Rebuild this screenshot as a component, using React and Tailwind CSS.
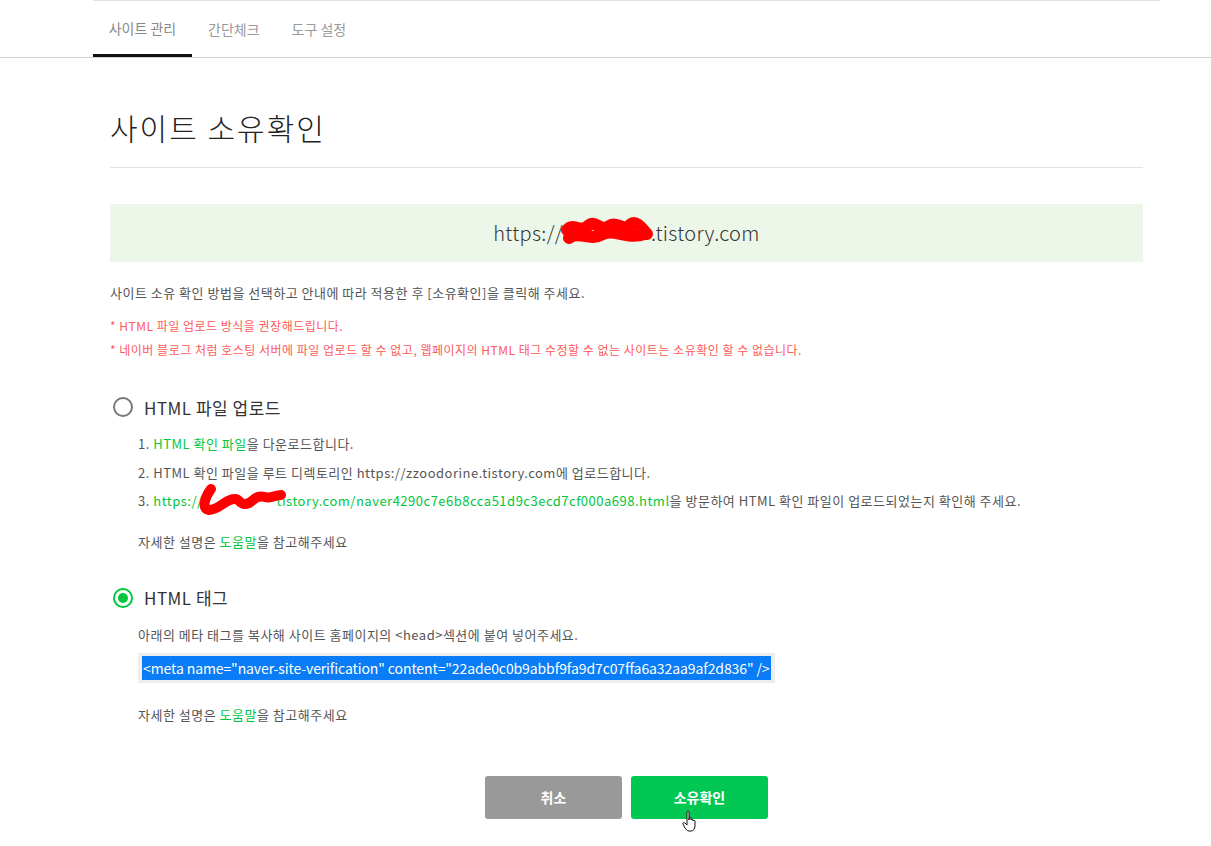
import React from "react";

const font = { fontFamily: '"Noto Sans CJK KR", "Noto Sans", sans-serif' };

const Radio = ({ checked }) =>
  checked ? (
    <span className="ml-[3px] w-[20px] h-[20px] rounded-full border-[2px] border-[#00c73c] flex items-center justify-center">
      <span className="w-[10px] h-[10px] rounded-full bg-[#00c73c]" />
    </span>
  ) : (
    <span className="ml-[3px] w-[20px] h-[20px] rounded-full border-[2px] border-[#777]" />
  );

const Help = () => (
  <p className="text-[13px] text-[#555] pl-[28px] tracking-[0.5px]">
    자세한 설명은 <span className="text-[#00c73c]">도움말</span>을 참고해주세요
  </p>
);

export default function App() {
  return (
    <div className="w-[1211px] h-[846px] bg-white overflow-hidden relative" style={font}>
      {/* tab bar */}
      <div className="border-b border-[#cfcfcf]">
        <div className="ml-[93px] w-[1067px] border-t border-[#e2e2e2] h-[57px] flex">
          <div className="w-[99px] flex items-center justify-center border-b-[3px] border-[#111] text-[14px] text-[#888] pt-[2px]">사이트 관리</div>
          <div className="px-[16px] flex items-center text-[14px] text-[#999]">간단체크</div>
          <div className="px-[16px] flex items-center text-[14px] text-[#999]">도구 설정</div>
        </div>
      </div>

      <div className="ml-[110px] w-[1033px]">
        <h1 className="text-[30px] font-light tracking-[2px] text-[#222] pt-[48px] pb-[19px] leading-[42px] border-b border-[#e3e3e3]">사이트 소유확인</h1>

        <div className="mt-[36px] h-[58px] bg-[#edf7e9] flex items-center justify-center text-[20px] font-light tracking-[0.3px] text-[#333]">
          <span>https://</span>
          <span className="relative inline-block w-[88px] h-[24px]">
            <svg width="96" height="34" viewBox="0 0 96 34" className="absolute -left-[4px] -top-[5px]">
              <path d="M8 14 C14 6 22 18 30 9 C36 4 42 16 50 10 C58 4 64 17 72 8 C78 4 84 14 88 18 M10 22 C20 14 30 26 44 18 C56 12 66 24 86 18" fill="none" stroke="#ff0000" strokeWidth="12" strokeLinecap="round" strokeLinejoin="round" />
            </svg>
          </span>
          <span>.tistory.com</span>
        </div>

        <p className="mt-[21px] text-[13px] text-[#555] tracking-[0.5px]">사이트 소유 확인 방법을 선택하고 안내에 따라 적용한 후 [소유확인]을 클릭해 주세요.</p>
        <p className="mt-[14px] text-[12px] text-[#ff5a5a] tracking-[0.5px]">* HTML 파일 업로드 방식을 권장해드립니다.</p>
        <p className="mt-[6px] text-[12px] text-[#ff5a5a] tracking-[0.5px]">* 네이버 블로그 처럼 호스팅 서버에 파일 업로드 할 수 없고, 웹페이지의 HTML 태그 수정할 수 없는 사이트는 소유확인 할 수 없습니다.</p>

        <div className="mt-[36px] flex items-center gap-[11px]">
          <Radio />
          <span className="text-[17px] text-[#333] tracking-[0.5px]">HTML 파일 업로드</span>
        </div>
        <div className="mt-[14px] pl-[28px] text-[13px] text-[#555] tracking-[0.5px] flex flex-col gap-[9px]">
          <p>1. <span className="text-[#00c73c]">HTML 확인 파일</span>을 다운로드합니다.</p>
          <p>2. HTML 확인 파일을 루트 디렉토리인 https://zzoodorine.tistory.com에 업로드합니다.</p>
          <p>
            3. <span className="text-[#00c73c]">https://</span>
            <span className="relative inline-block w-[74px] h-[14px] align-middle">
              <svg width="92" height="36" viewBox="0 0 92 36" className="absolute -left-[8px] -top-[12px]">
                <path d="M16 6 C10 14 6 26 14 27 C26 26 30 16 40 16 C46 16 44 24 54 20 C60 16 62 12 70 14 C76 16 80 12 86 12" fill="none" stroke="#ff0000" strokeWidth="10" strokeLinecap="round" strokeLinejoin="round" />
              </svg>
            </span>
            <span className="text-[#00c73c]">tistory.com/naver4290c7e6b8cca51d9c3ecd7cf000a698.html</span>을 방문하여 HTML 확인 파일이 업로드되었는지 확인해 주세요.
          </p>
        </div>
        <div className="mt-[21px]"><Help /></div>

        <div className="mt-[34px] flex items-center gap-[11px]">
          <Radio checked />
          <span className="text-[17px] text-[#333] tracking-[0.5px]">HTML 태그</span>
        </div>
        <p className="mt-[14px] pl-[28px] text-[13px] text-[#555] tracking-[0.5px]">아래의 메타 태그를 복사해 사이트 홈페이지의 &lt;head&gt;섹션에 붙여 넣어주세요.</p>
        <div className="mt-[9px] ml-[28px] w-[637px] h-[30px] bg-[#eeeeee] flex items-center px-[4px]">
          <span className="bg-[#0a7cf5] text-white text-[14px] leading-[24px] px-[1px] whitespace-nowrap tracking-[-0.1px]">
            &lt;meta name="naver-site-verification" content="22ade0c0b9abbf9fa9d7c07ffa6a32aa9af2d836" /&gt;
          </span>
        </div>
        <div className="mt-[22px]"><Help /></div>

        <div className="mt-[51px] flex justify-center gap-[9px]">
          <button className="w-[137px] h-[43px] rounded-[3px] bg-[#999999] text-white text-[14px] font-bold">취소</button>
          <button className="relative w-[137px] h-[43px] rounded-[3px] bg-[#00c853] text-white text-[14px] font-bold">
            소유확인
            <svg width="18" height="24" viewBox="0 0 18 24" className="absolute left-[51px] top-[34px]">
              <path d="M5 2 C5 0.8 7 0.8 7 2 L7 10 L7 8 C7 7 9 7 9 8 L9 10 C9 9 11 9 11 10 L11 11 C11 10 13 10 13 11 L13 16 C13 19 11 21 9 21 L7 21 C5 21 4 19 3 18 L1 14 C0.5 13 2 12 3 13 L5 15 Z" fill="#fff" stroke="#111" strokeWidth="1" strokeLinejoin="round" />
            </svg>
          </button>
        </div>
      </div>
    </div>
  );
}
